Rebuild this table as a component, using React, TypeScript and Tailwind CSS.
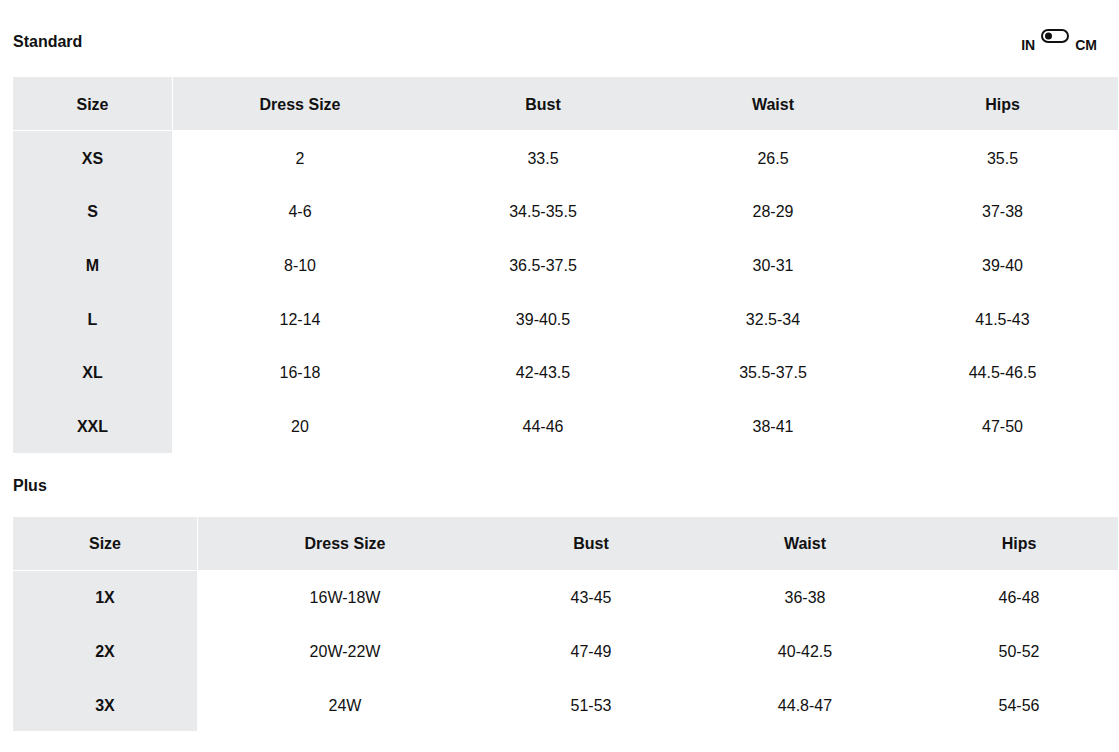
import React from "react";

type Table = {
  cols: string;
  header: string[];
  rows: string[][];
};

const standard: Table = {
  cols: "grid-cols-[160px_254px_232px_228px_231px]",
  header: ["Size", "Dress Size", "Bust", "Waist", "Hips"],
  rows: [
    ["XS", "2", "33.5", "26.5", "35.5"],
    ["S", "4-6", "34.5-35.5", "28-29", "37-38"],
    ["M", "8-10", "36.5-37.5", "30-31", "39-40"],
    ["L", "12-14", "39-40.5", "32.5-34", "41.5-43"],
    ["XL", "16-18", "42-43.5", "35.5-37.5", "44.5-46.5"],
    ["XXL", "20", "44-46", "38-41", "47-50"],
  ],
};

const plus: Table = {
  cols: "grid-cols-[185px_294px_198px_230px_198px]",
  header: ["Size", "Dress Size", "Bust", "Waist", "Hips"],
  rows: [
    ["1X", "16W-18W", "43-45", "36-38", "46-48"],
    ["2X", "20W-22W", "47-49", "40-42.5", "50-52"],
    ["3X", "24W", "51-53", "44.8-47", "54-56"],
  ],
};

function SizeTable({ t }: { t: Table }) {
  return (
    <div className="w-[1105px]">
      <div className={`grid ${t.cols} h-[54px] bg-[#e9eaec] border-b border-white`}>
        {t.header.map((h, i) => (
          <div
            key={h}
            className={`flex items-center justify-center pt-[2px] font-bold text-[16px] ${i === 0 ? "border-r border-white" : ""}`}
          >
            {h}
          </div>
        ))}
      </div>
      {t.rows.map((r, ri) => (
        <div key={ri} className={`grid ${t.cols} h-[53.6px]`}>
          {r.map((c, i) => (
            <div
              key={i}
              className={`flex items-center justify-center pt-[2px] text-[16px] ${
                i === 0 ? "bg-[#e9eaec] font-bold border-r border-white" : ""
              }`}
            >
              {c}
            </div>
          ))}
        </div>
      ))}
    </div>
  );
}

export default function App() {
  return (
    <div
      className="w-[1119px] h-[752px] bg-white text-[#111] pl-[13px] overflow-hidden"
      style={{ fontFamily: '"Liberation Sans", Arial, sans-serif' }}
    >
      <div className="flex items-center justify-between h-[77px] pr-[22px] pt-[6px]">
        <div className="font-bold text-[16px]">Standard</div>
        <div className="flex items-center gap-[6px] font-bold text-[14px] pt-[6px]">
          <span className="leading-none">IN</span>
          <svg width="28" height="14" viewBox="0 0 28 14" className="-translate-y-[9px]">
            <rect x="1" y="1" width="26" height="12" rx="6" fill="none" stroke="#111" strokeWidth="2" />
            <circle cx="7.5" cy="7" r="3.5" fill="#111" />
          </svg>
          <span className="leading-none">CM</span>
        </div>
      </div>
      <SizeTable t={standard} />
      <div className="h-[64px] flex items-center font-bold text-[16px] pt-[2px]">Plus</div>
      <SizeTable t={plus} />
    </div>
  );
}
